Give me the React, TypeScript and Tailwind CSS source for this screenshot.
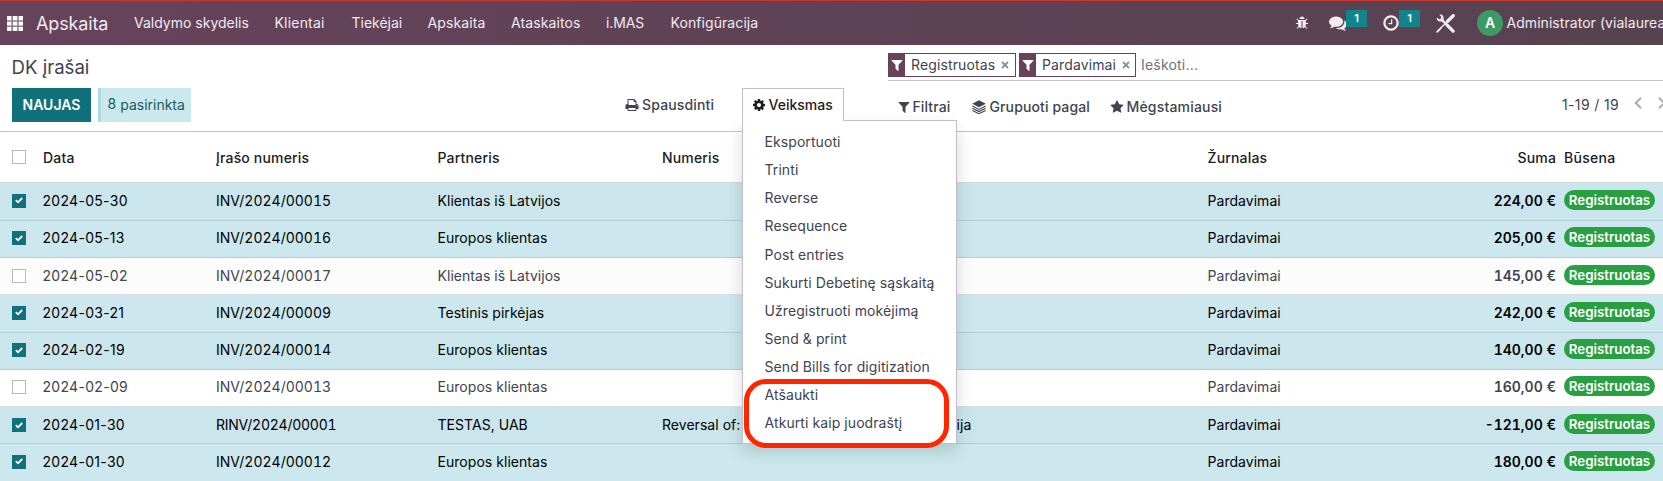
import type { ReactNode } from "react";

const PATHS = {
  filter: "M1595 295q17 41-14 70l-493 493v742q0 42-39 59-13 5-25 5-27 0-45-19l-256-256q-19-19-19-45v-486l-493-493q-31-29-14-70 17-39 59-39h1280q42 0 59 39z",
  cog: "M1152 896q0-106-75-181t-181-75-181 75-75 181 75 181 181 75 181-75 75-181zm512-109v222q0 12-8 23t-20 13l-185 28q-19 54-39 91 35 50 107 138 10 12 10 25t-9 23q-27 37-99 108t-94 71q-12 0-26-9l-138-108q-44 23-91 38-16 136-29 186-7 28-36 28h-222q-14 0-24.5-8.5t-11.5-21.5l-28-184q-49-16-90-37l-141 107q-10 9-25 9-14 0-25-11-126-114-165-168-7-10-7-23 0-12 8-23 15-21 51-66.5t54-70.5q-27-50-41-99l-183-27q-13-2-21-12.5t-8-23.5v-222q0-12 8-23t19-13l186-28q14-46 39-92-40-57-107-138-10-12-10-24 0-10 9-23 26-36 98.5-107.5t94.5-71.5q13 0 26 10l138 107q44-23 91-38 16-136 29-186 7-28 36-28h222q14 0 24.5 8.5t11.5 21.5l28 184q49 16 90 37l142-107q9-9 24-9 13 0 25 10 129 119 165 170 7 8 7 22 0 12-8 23-15 21-51 66.5t-54 70.5q26 50 41 98l183 28q13 2 21 12.5t8 23.5z",
  print: "M448 1536h896v-256h-896v256zm0-640h896v-384h-160q-40 0-68-28t-28-68v-160h-640v640zm1152 64q0-26-19-45t-45-19-45 19-19 45 19 45 45 19 45-19 19-45zm128 0v416q0 13-9.5 22.5t-22.5 9.5h-224v160q0 40-28 68t-68 28h-960q-40 0-68-28t-28-68v-160h-224q-13 0-22.5-9.5t-9.5-22.5v-416q0-79 56.5-135.5t135.5-56.5h64v-544q0-40 28-68t68-28h672q40 0 88 20t76 48l152 152q28 28 48 76t20 88v256h64q79 0 135.5 56.5t56.5 135.5z",
  clock: "M1024 544v448q0 14-9 23t-23 9h-320q-14 0-23-9t-9-23v-64q0-14 9-23t23-9h224v-352q0-14 9-23t23-9h64q14 0 23 9t9 23zm416 352q0-148-73-273t-198-198-273-73-273 73-198 198-73 273 73 273 198 198 273 73 273-73 198-198 73-273zm224 0q0 209-103 385.5t-279.5 279.5-385.5 103-385.5-103-279.5-279.5-103-385.5 103-385.5 279.5-279.5 385.5-103 385.5 103 279.5 279.5 103 385.5z",
  comments: "M1408 768q0 139-94 257t-256.5 186.5-353.5 68.5q-86 0-176-16-124 88-278 128-36 9-86 16h-3q-11 0-20.5-8t-11.5-21q-1-3-1-6.5t.5-6.5 2-6l2.5-5 3.5-5.5 4-5 4.5-5 4-4.5q5-6 23-25t26-29.5 22.5-29 25-38.5 20.5-44q-124-72-195-177t-71-224q0-139 94-257t256.5-186.5 353.5-68.5 353.5 68.5 256.5 186.5 94 257zm384 256q0 120-71 224.5t-195 176.5q10 24 20.5 44t25 38.5 22.5 29 26 29.5 23 25q1 1 4 4.5t4.5 5 4 5 3.5 5.5l2.5 5 2 6 .5 6.5-1 6.5q-3 14-13 22t-22 7q-50-7-86-16-154-40-278-128-90 16-176 16-271 0-472-132 58 4 88 4 161 0 309-45t264-129q125-92 192-212t67-254q0-77-23-152 129 71 204 178t75 230z",
  bug: "M1696 960q0 26-19 45t-45 19h-224q0 171-67 290l208 209q19 19 19 45t-19 45q-18 19-45 19t-45-19l-198-197q-5 5-15 13t-42 28.5-65 36.5-82 29-97 13v-896h-128v896q-51 0-101.5-13.5t-87-33-66-39-43.5-32.5l-15-14-183 207q-20 21-48 21-24 0-43-16-19-18-20.5-44.5t15.5-46.5l202-227q-58-114-58-274h-224q-26 0-45-19t-19-45 19-45 45-19h224v-294l-173-173q-19-19-19-45t19-45 45-19 45 19l173 173h844l173-173q19-19 45-19t45 19 19 45-19 45l-173 173v294h224q26 0 45 19t19 45zm-480-576h-640q0-133 93.5-226.5t226.5-93.5 226.5 93.5 93.5 226.5z",
  star: "M1728 647q0 22-26 48l-363 354 86 500q1 7 1 20 0 21-10.5 35.5t-30.5 14.5q-19 0-40-12l-449-236-449 236q-22 12-40 12-21 0-31.5-14.5t-10.5-35.5q0-6 2-20l86-500-364-354q-25-27-25-48 0-37 56-46l502-73 225-455q19-41 49-41t49 41l225 455 502 73q56 9 56 46z",
};

function Icon({ name, className }: { name: keyof typeof PATHS; className: string }) {
  return (
    <svg viewBox="0 0 1792 1792" fill="currentColor" className={`shrink-0 ${className}`}>
      <path d={PATHS[name]} />
    </svg>
  );
}

function Layers() {
  return (
    <svg viewBox="0 0 14 14" className="h-[14px] w-[14px] shrink-0" fill="none">
      <path d="M7 0.2 L13.8 3.7 L7 7.2 L0.2 3.7 Z" fill="currentColor" />
      <path d="M0.4 6.1 L7 9.4 L13.6 6.1 M0.4 8.3 L7 11.6 L13.6 8.3 M0.4 10.4 L7 13.7 L13.6 10.4" stroke="currentColor" strokeWidth="1.1" />
    </svg>
  );
}

function Tools() {
  return (
    <svg viewBox="0 0 18 18" className="h-[19px] w-[19px] shrink-0" fill="none" stroke="currentColor">
      <path d="M16.3 1.6 L11 6.9" strokeWidth="3.2" strokeLinecap="round" />
      <path d="M11 6.9 L3.6 14.3" strokeWidth="1.3" />
      <path d="M4.4 13.1 L4.9 13.6 L2.2 16.9 L0.6 17.4 L1.1 15.8 Z" fill="currentColor" strokeWidth="0.8" />
      <path d="M5.8 5.8 L11 11" strokeWidth="2.2" />
      <path d="M10.8 10.8 L16.2 16.2" strokeWidth="3.2" strokeLinecap="round" />
      <path d="M3.2 0.6 C5.6 0 7.8 2 7.2 4.6 L7.6 6.6 L6.4 7.6 L4.8 7.1 C2.2 7.7 0.2 5.5 0.8 3.1 L2.7 4.9 L4.4 4.4 L4.9 2.6 Z" fill="currentColor" stroke="none" />
    </svg>
  );
}

function Chevron({ flip }: { flip?: boolean }) {
  return (
    <svg viewBox="0 0 8 12" className={`h-3 w-2 shrink-0 text-[#adb0b5] ${flip ? "-scale-x-100" : ""}`} fill="none" stroke="currentColor" strokeWidth="2.2">
      <path d="M7 0.8 L1.8 6 L7 11.2" />
    </svg>
  );
}

const menus: [string, string][] = [
  ["Valdymo skydelis", "w-[140.5px]"],
  ["Klientai", "w-[77px] tracking-[0.2px]"],
  ["Tiekėjai", "w-[76px]"],
  ["Apskaita", "w-[83.5px] tracking-[0.1px]"],
  ["Ataskaitos", "w-[95px] tracking-[0.1px]"],
  ["i.MAS", "w-[64.5px] tracking-[-0.1px]"],
  ["Konfigūracija", "tracking-[0.08px]"],
];

function Navbar() {
  return (
    <header className="flex h-[45px] shrink-0 items-center border-t border-[#c9372c] bg-linear-to-r from-[#66435b] to-[#574250] pl-[7px] text-[#f0ebee]">
      <svg viewBox="0 0 16 15" className="h-[15px] w-4 shrink-0" fill="#fff">
        <path d="M0 0h16v15h-16z" opacity="0.3" />
        <path d="M0 0h4.3v4.2h-4.3zM6 0h4.2v4.2h-4.2zM11.8 0h4.2v4.2h-4.2zM0 5.8h4.3v3.6h-4.3zM6 5.8h4.2v3.6h-4.2zM11.8 5.8h4.2v3.6h-4.2zM0 11h4.3v4h-4.3zM6 11h4.2v4h-4.2zM11.8 11h4.2v4h-4.2z" />
      </svg>
      <span className="ml-[13px] w-[98px] shrink-0 pt-[2px] text-[18px] tracking-[-0.15px]">Apskaita</span>
      <nav className="flex">
        {menus.map(([label, cls]) => (
          <span key={label} className={`shrink-0 whitespace-nowrap ${cls}`}>{label}</span>
        ))}
      </nav>
      <div className="ml-auto flex w-[368px] shrink-0 items-center">
        <Icon name="bug" className="h-[14px] w-[14px]" />
        <div className="ml-5 flex h-[26px] w-[40px] shrink-0 items-center">
          <Icon name="comments" className="h-[18px] w-[18px]" />
          <Badge />
        </div>
        <div className="ml-[13px] flex h-[26px] w-[39px] shrink-0 items-center">
          <Icon name="clock" className="h-[18px] w-[18px]" />
          <Badge />
        </div>
        <div className="ml-[15px] shrink-0"><Tools /></div>
        <div className="ml-[22px] flex h-[26px] w-[26px] shrink-0 items-center justify-center rounded-full bg-[#3e9a64] text-[14px] font-semibold text-white">A</div>
        <span className="ml-[3.5px] whitespace-nowrap tracking-[0.05px]">Administrator (vialaurea)</span>
      </div>
    </header>
  );
}

function Badge() {
  return (
    <span className="-ml-px flex h-[17px] w-[21px] shrink-0 -translate-y-[5px] items-center justify-center bg-[#12848c] text-[11px] font-semibold text-white">1</span>
  );
}

function Facet({ label, className }: { label: string; className: string }) {
  return (
    <div className={`flex h-6 shrink-0 items-center border border-[#66435b] ${className}`}>
      <span className="flex h-full w-4 shrink-0 items-center justify-center bg-[#66435b] text-white">
        <Icon name="filter" className="h-[14px] w-[14px]" />
      </span>
      <span className="ml-1.5 tracking-[0.12px]">{label}</span>
      <svg viewBox="0 0 8 8" className="ml-[6px] h-2 w-2 shrink-0" stroke="#8f9298" strokeWidth="1.9">
        <path d="M1 1 L7 7 M7 1 L1 7" />
      </svg>
    </div>
  );
}

const actions = [
  "Eksportuoti", "Trinti", "Reverse", "Resequence", "Post entries", "Sukurti Debetinę sąskaitą",
  "Užregistruoti mokėjimą", "Send & print", "Send Bills for digitization", "Atšaukti", "Atkurti kaip juodraštį",
];

function ActionMenu() {
  return (
    <div className="relative h-[34px] w-[102px] shrink-0">
      <div className="absolute top-8 left-0 z-10 h-[324px] w-[215px] border border-[#bfbfcb] bg-white pt-[7px] shadow-[0_8px_16px_rgba(0,0,0,0.15)]">
        {actions.map((a) => (
          <div key={a} className="flex h-[28.13px] items-center pl-[21.5px] tracking-[0.08px] whitespace-nowrap">{a}</div>
        ))}
      </div>
      <div className="absolute top-[291px] left-[2px] z-20 h-[69px] w-[205px] rounded-[22px] border-[5px] border-[#ff2600]" />
      <div className="relative z-20 flex h-[33px] items-center border border-b-0 border-[#bfbfcb] bg-white pl-[9px] font-medium text-[#1c2025]">
        <Icon name="cog" className="h-[14px] w-[14px]" />
        <span className="ml-[2.5px]">Veiksmas</span>
      </div>
    </div>
  );
}

function ControlPanel() {
  return (
    <section className="flex h-[87px] shrink-0 border-b border-[#c4c4c8] pl-3">
      <div className="flex w-[876px] shrink-0 flex-col">
        <h1 className="-ml-[0.5px] flex h-[43px] items-center text-[18.6px] leading-6">DK įrašai</h1>
        <div className="flex">
          <button className="h-[34px] w-[79px] bg-[#11717a] font-semibold text-white">NAUJAS</button>
          <div className="ml-[7px] flex h-[34px] w-[93px] items-center border-l-[3px] border-[#aadbe3] bg-[#cbe8ed] pl-[6.5px] text-[#165b64]">
            <span className="-translate-y-px">8</span>
            <span className="ml-1">pasirinkta</span>
          </div>
          <div className="ml-[434px] flex h-[34px] w-[117px] items-center font-medium tracking-[0.15px]">
            <Icon name="print" className="h-[14px] w-[14px]" />
            <span className="ml-[3px]">Spausdinti</span>
          </div>
          <ActionMenu />
        </div>
      </div>
      <div className="flex min-w-0 flex-1 flex-col">
        <div className="flex h-9 shrink-0 items-center border-b border-[#c4c4cf] pt-2 pb-[3px]">
          <Facet label="Registruotas" className="w-32" />
          <Facet label="Pardavimai" className="ml-[3px] w-[117px]" />
          <span className="ml-[5px] tracking-[0.2px] text-[#6d727c]">Ieškoti...</span>
        </div>
        <div className="flex h-9 font-medium">
          <div className="flex h-9 items-center pt-[15px] tracking-[0.12px]">
            <div className="flex w-[73px] items-center pl-[9px]"><Icon name="filter" className="h-[14px] w-[14px]" /><span className="ml-[1.5px]">Filtrai</span></div>
            <div className="flex w-[139px] items-center pl-[11px]"><Layers /><span className="ml-[3.5px] whitespace-nowrap">Grupuoti pagal</span></div>
            <div className="flex items-center pl-[10px]"><Icon name="star" className="h-[14px] w-[14px]" /><span className="ml-[2.5px] tracking-[0.18px]">Mėgstamiausi</span></div>
          </div>
          <div className="ml-auto flex h-9 w-[101px] shrink-0 items-center pt-[11px] font-normal">
            <span className="w-[72px] shrink-0 tracking-[0.35px] whitespace-nowrap">1-19 / 19</span>
            <div className="-mt-[3px] flex gap-4"><Chevron /><Chevron flip /></div>
          </div>
        </div>
      </div>
    </section>
  );
}

function Checkbox({ checked }: { checked?: boolean }) {
  return checked ? (
    <span className="flex h-[14px] w-[14px] items-center justify-center bg-[#11717a]">
      <svg viewBox="0 0 8 7" className="h-[7px] w-2" fill="none" stroke="#fff" strokeWidth="1.8">
        <path d="M0.8 3.2 L3 5.3 L7.2 1" />
      </svg>
    </span>
  ) : (
    <span className="h-[14px] w-[14px] border border-[#b9b9bd] bg-white" />
  );
}

const cols = "grid grid-cols-[31px_173px_221.5px_224.5px_545.5px_348.5px_107px] items-center pl-3";

const rows: { date: string; num: string; partner: string; ref?: string; sum: string; on: boolean; style: string }[] = [
  { date: "2024-05-30", num: "INV/2024/00015", partner: "Klientas iš Latvijos", sum: "224,00 €", on: true, style: "h-[38px] pb-[2px] border-[#b1ccd2] bg-[#cae6ec]" },
  { date: "2024-05-13", num: "INV/2024/00016", partner: "Europos klientas", sum: "205,00 €", on: true, style: "h-[37px] pb-[2px] border-[#b1ccd2] bg-[#cce8ee]" },
  { date: "2024-05-02", num: "INV/2024/00017", partner: "Klientas iš Latvijos", sum: "145,00 €", on: false, style: "h-[37px] border-[#dcdee0] bg-[#fcfcfc]" },
  { date: "2024-03-21", num: "INV/2024/00009", partner: "Testinis pirkėjas", sum: "242,00 €", on: true, style: "h-[38px] pb-[2px] border-[#b1ccd2] bg-[#cce8ee]" },
  { date: "2024-02-19", num: "INV/2024/00014", partner: "Europos klientas", sum: "140,00 €", on: true, style: "h-[37px] pb-[2px] border-[#b1ccd2] bg-[#cae6ec]" },
  { date: "2024-02-09", num: "INV/2024/00013", partner: "Europos klientas", sum: "160,00 €", on: false, style: "h-[37px] pb-[2px] border-[#dcdee0] bg-white" },
  { date: "2024-01-30", num: "RINV/2024/00001", partner: "TESTAS, UAB", ref: "Reversal of: INV/2024/00010 Korekcinė versija", sum: "-121,00 €", on: true, style: "h-[37px] border-[#b1ccd2] bg-[#cae6ec]" },
  { date: "2024-01-30", num: "INV/2024/00012", partner: "Europos klientas", sum: "180,00 €", on: true, style: "h-[38px] pb-[2px] border-[#cce8ee] bg-[#cce8ee]" },
];

function Cell({ children }: { children?: ReactNode }) {
  return <span className="tracking-[0.04px] whitespace-nowrap">{children}</span>;
}

function Table() {
  return (
    <section className="flex flex-col">
      <div className={`${cols} h-[51px] border-b border-[#d5dadd] pt-px font-medium tracking-[0.17px] text-[#1c2025]`}>
        <span className="-mt-[2px] flex"><Checkbox /></span>
        <span>Data</span>
        <span>Įrašo numeris</span>
        <span>Partneris</span>
        <span>Numeris</span>
        <span>Žurnalas</span>
        <span className="-ml-[100px] flex">
          <span className="w-[100px] shrink-0 text-right">Suma</span>
          <span className="ml-[8px] tracking-[0.3px]">Būsena</span>
        </span>
      </div>
      {rows.map((r, i) => (
        <div key={i} className={`${cols} border-b ${r.style} ${r.on ? "text-black" : "text-[#40444f]"}`}>
          <Checkbox checked={r.on} />
          <span className="-ml-[0.5px] tracking-[0.3px]">{r.date}</span>
          <span className={`tabular-nums ${r.num.startsWith("R") ? "tracking-[-0.25px]" : ""}`}>{r.num}</span>
          <Cell>{r.partner}</Cell>
          <Cell>{r.ref}</Cell>
          <Cell>Pardavimai</Cell>
          <div className="-ml-[100px] flex items-center">
            <span className="w-[100px] shrink-0 text-right font-semibold tabular-nums">{r.sum}</span>
            <span className="ml-2 flex h-5 w-[91px] shrink-0 -translate-y-px items-center justify-center rounded-full bg-[#289f42] text-[13.3px] font-semibold text-white">Registruotas</span>
          </div>
        </div>
      ))}
    </section>
  );
}

export default function App() {
  return (
    <div className="flex h-[481px] w-full flex-col overflow-hidden bg-white font-['Inter',sans-serif] text-[14px] leading-5 text-[#40444f]">
      <Navbar />
      <ControlPanel />
      <Table />
    </div>
  );
}
